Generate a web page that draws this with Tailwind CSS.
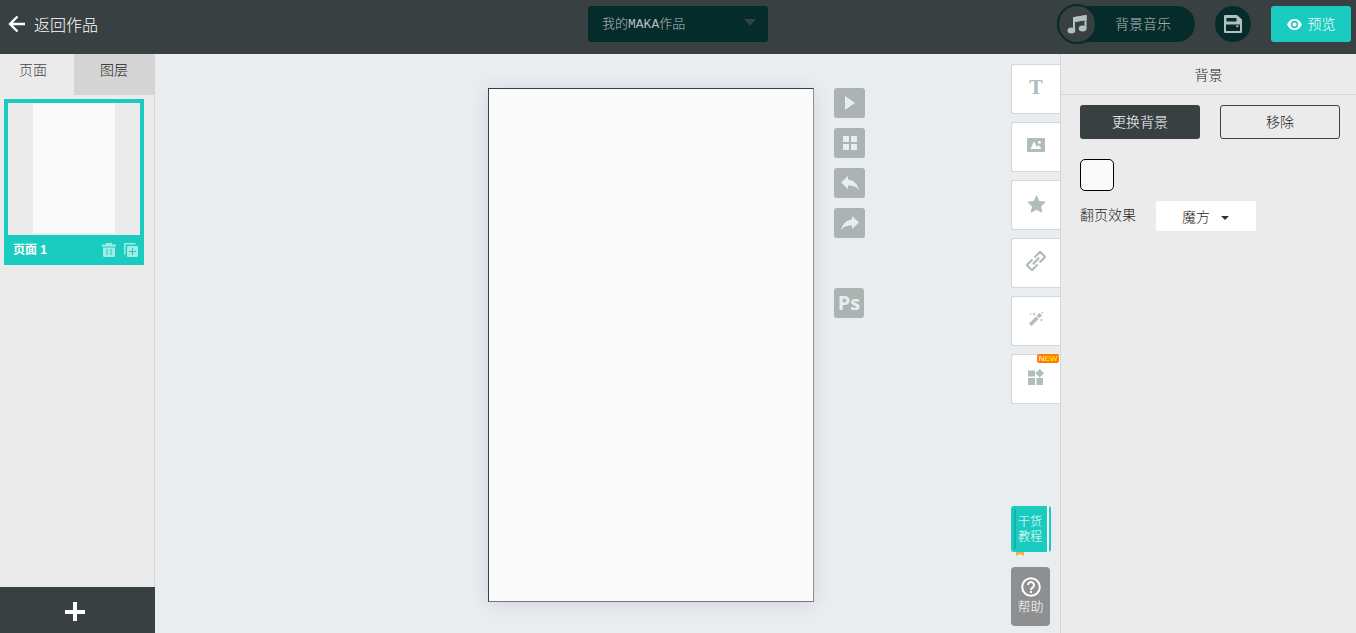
<!DOCTYPE html>
<html lang="zh-CN">
<head>
  <meta charset="UTF-8" />
  <meta name="viewport" content="width=device-width, initial-scale=1.0"/>
  <title>MAKA</title>
  <script src="https://cdn.jsdelivr.net/npm/@tailwindcss/browser@4"></script>
</head>
<body class="h-screen flex flex-col overflow-hidden bg-[#e9edf0] text-sm font-light text-[#1c1c1c] font-['Liberation_Sans','Noto_Sans_CJK_SC',sans-serif]">

  <!-- 顶部栏 -->
  <header class="h-[54px] shrink-0 grid grid-cols-[1fr_auto_1fr] items-start bg-[#384042] text-white">
    <a href="#" class="flex items-center gap-2 h-12 pl-2 text-base">
      <svg class="w-[18px] h-[18px]" viewBox="0 0 18 18" fill="none" stroke="currentColor" stroke-width="2.4"><path d="M17 9H2M9.5 1.5 2 9l7.5 7.5"/></svg>
      <span class="pt-1">返回作品</span>
    </a>

    <div class="relative mt-1.5">
      <select aria-label="作品" class="appearance-none w-[180px] h-9 pt-0.5 pl-3.5 rounded-[3px] bg-[#052b2a] text-[#b4bfbf] text-[13px] font-['Liberation_Mono','Noto_Sans_CJK_SC',monospace]">
        <option>我的MAKA作品</option>
      </select>
      <svg class="absolute right-3 top-[13px] w-3 h-[7px] pointer-events-none" viewBox="0 0 12 7" fill="#384042"><path d="M0 0h12L6 7z"/></svg>
    </div>

    <div class="flex justify-end items-center gap-5 h-12 pr-[5px]">
      <button class="flex items-center h-9 w-[138px] rounded-full bg-[#052b2a] text-[#b4bfbf]">
        <span class="flex items-center justify-center shrink-0 w-10 h-10 rounded-full border-2 border-[#052b2a] bg-[#384042]">
          <svg class="w-5 h-5" viewBox="0 0 20 20" fill="currentColor"><path fill-rule="evenodd" d="M6 3.200 19.500 1v13.500h-2V6.300L8 7.900v8.600H6z"/><path d="M6 3.200 19.500 1v5L6 8.200z"/><ellipse cx="4.400" cy="16.400" rx="3.900" ry="3"/><ellipse cx="15.600" cy="14.500" rx="3.900" ry="3"/></svg>
        </span>
        <span class="pl-[18px]">背景音乐</span>
      </button>
      <button aria-label="保存" class="flex items-center justify-center w-9 h-9 rounded-full bg-[#052b2a] text-[#b4bfbf]">
        <svg class="w-[18px] h-[18px]" viewBox="0 0 18 18" fill="currentColor" fill-rule="evenodd"><path d="M1 0H13l5 4.500V17a1 1 0 0 1-1 1H1a1 1 0 0 1-1-1V1a1 1 0 0 1 1-1zM2.500 3v3.500h10V3zM2 9.500V16h14V9.500zM12 10.500h2.500V12H12z"/></svg>
      </button>
      <button class="flex items-center justify-center gap-1.5 w-20 h-9 rounded-[3px] bg-[#1accc0]">
        <svg class="w-[15px] h-[11px]" viewBox="0 0 15 11" fill="currentColor" fill-rule="evenodd"><path d="M7.500 0C11 0 13.500 2 15 5.500 13.500 9 11 11 7.500 11S1.500 9 0 5.500C1.500 2 4 0 7.500 0zm0 1.800a3.700 3.700 0 1 0 0 7.400 3.700 3.700 0 0 0 0-7.400zm0 1.600a2.100 2.100 0 1 1 0 4.200 2.100 2.100 0 0 1 0-4.200z"/></svg>
        预览
      </button>
    </div>
  </header>

  <div class="flex-1 min-h-0 flex">

    <!-- 页面列表 -->
    <aside class="w-[155px] shrink-0 flex flex-col bg-[#ebebeb]">
      <div class="flex-1 border-r border-[#d3d5d6]">
        <div class="flex h-[41px]">
          <button class="w-[74px] pb-2.5 pr-2 text-[#444]">页面</button>
          <button class="flex-1 pb-2.5 bg-[#d5d5d5]">图层</button>
        </div>
        <div class="w-[140px] ml-1 mt-1 border-4 border-[#1accc0] bg-[#1accc0]">
          <div class="flex justify-center h-[132px] bg-[#ebebeb]">
            <div class="w-[82px] h-[130px] bg-[#fafafa]"></div>
          </div>
          <div class="flex items-center h-[26px] pt-1 pl-[5px] pr-[2px] text-white">
            <span class="flex-1 text-xs font-bold">页面 1</span>
            <button aria-label="删除" class="mr-2">
              <svg class="w-3.5 h-3.5" viewBox="0 0 14 14" fill="#a3ebe6" fill-rule="evenodd"><path d="M4 0h6v1.500h4v2H0v-2h4zM1 4.500h12V12.500a1.500 1.500 0 0 1-1.500 1.500h-9A1.500 1.500 0 0 1 1 12.500zM4.500 6v6h1V6zM8.500 6v6h1V6z"/></svg>
            </button>
            <button aria-label="复制">
              <svg class="w-3.5 h-3.5" viewBox="0 0 14 14" fill="#a3ebe6" fill-rule="evenodd"><path d="M1 0h10.500v1.500h-10v10H0V1a1 1 0 0 1 1-1zM4 3h9a1 1 0 0 1 1 1v9a1 1 0 0 1-1 1H4a1 1 0 0 1-1-1V4a1 1 0 0 1 1-1zM8 5v3H5v1h3v3h1V9h3V8H9V5z"/></svg>
            </button>
          </div>
        </div>
      </div>
      <button aria-label="添加页面" class="flex items-center justify-center h-[46px] pt-1 pr-1.5 bg-[#384042] text-white">
        <svg class="w-5 h-5" viewBox="0 0 20 20" fill="none" stroke="currentColor" stroke-width="4"><path d="M10 0v19M0 10h20"/></svg>
      </button>
    </aside>

    <!-- 画布 -->
    <main class="flex-1 flex">
      <div class="flex-1 flex justify-center gap-5 pt-[34px] pb-[31px] pl-[187px]">
        <div class="w-[326px] border border-[#384042] border-r-[#8c9091] border-b-[#77797b] bg-[#fafafa] shadow-[0_2px_16px_rgba(80,60,90,0.14)]"></div>
        <div class="flex flex-col gap-2.5 text-[#e9edf0]">
          <button aria-label="播放" class="flex items-center justify-center w-[31px] h-[30px] rounded-[3px] bg-[#abb4b3]">
            <svg class="w-2.5 h-3.5" viewBox="0 0 10 14" fill="currentColor"><path d="M0 0v14l10-7z"/></svg>
          </button>
          <button aria-label="网格" class="flex items-center justify-center w-[31px] h-[30px] rounded-[3px] bg-[#abb4b3]">
            <svg class="w-3.5 h-3.5" viewBox="0 0 14 14" fill="currentColor"><path d="M0 0h6v6H0zM8 0h6v6H8zM0 8h6v6H0zM8 8h6v6H8z"/></svg>
          </button>
          <button aria-label="撤销" class="flex items-center justify-center w-[31px] h-[30px] rounded-[3px] bg-[#abb4b3]">
            <svg class="w-[18px] h-3.5" viewBox="0 0 18 14" fill="currentColor"><path d="M7 0v3.500c6 .8 9.500 4.500 11 10.500-2.500-3.500-6-4.600-11-4.600V13L0 6.500z"/></svg>
          </button>
          <button aria-label="重做" class="flex items-center justify-center w-[31px] h-[30px] rounded-[3px] bg-[#abb4b3]">
            <svg class="w-[18px] h-3.5" viewBox="0 0 18 14" fill="currentColor"><path d="M11 0v3.500C5 4.300 1.500 8 0 14c2.500-3.500 6-4.600 11-4.600V13l7-6.500z"/></svg>
          </button>
          <button class="flex items-center justify-center w-[30px] h-[30px] mt-10 rounded-[3px] bg-[#abb4b3] text-xl font-bold font-['Open_Sans',sans-serif]">Ps</button>
        </div>
      </div>

      <!-- 元素工具 -->
      <div class="w-[49px] flex flex-col pt-2.5 text-[#b1bcbd]">
        <div class="flex flex-col gap-2">
          <button class="flex items-center justify-center h-[50px] pb-0.5 rounded-l-[3px] border border-r-0 border-[#d3d5d6] bg-white text-lg font-bold font-['DejaVu_Serif',serif]">T</button>
          <button aria-label="图片" class="flex items-center justify-center h-[50px] pb-1 rounded-l-[3px] border border-r-0 border-[#d3d5d6] bg-white">
            <svg class="w-[18px] h-3.5" viewBox="0 0 18 14" fill="currentColor" fill-rule="evenodd"><path d="M1 0h16a1 1 0 0 1 1 1v12a1 1 0 0 1-1 1H1a1 1 0 0 1-1-1V1a1 1 0 0 1 1-1zM3.500 11h11L11.500 7 9.800 9 7 3.500zM12.500 3a1.400 1.400 0 1 0 0 2.800 1.400 1.400 0 0 0 0-2.800z"/></svg>
          </button>
          <button aria-label="形状" class="flex items-center justify-center h-[50px] pb-0.5 rounded-l-[3px] border border-r-0 border-[#d3d5d6] bg-white">
            <svg class="w-[19px] h-[18px]" viewBox="0 0 19 18" fill="currentColor"><path d="m9.500 0 2.800 6 6.700.8-4.900 4.600L15.400 18l-5.900-3.300L3.600 18l1.300-6.600L0 6.800 6.700 6z"/></svg>
          </button>
          <button aria-label="链接" class="flex items-center justify-center h-[50px] pb-1 rounded-l-[3px] border border-r-0 border-[#d3d5d6] bg-white">
            <svg class="w-5 h-5" viewBox="0 0 20 20" fill="none" stroke="currentColor" stroke-width="2.200"><g transform="rotate(-45 10 10)"><path d="M8.600 6.400H.6v7.200h8M11.400 6.400h8v7.200h-8M5.500 10h9"/></g></svg>
          </button>
          <button aria-label="特效" class="flex items-center justify-center h-[50px] pb-1 rounded-l-[3px] border border-r-0 border-[#d3d5d6] bg-white">
            <svg class="w-3.5 h-3.5" viewBox="0 0 14 14" fill="currentColor"><path d="m0 11.500 7-7L9.500 7l-7 7zM7.800 3.700 10.500 1 13 3.500 10.300 6.200zM5 0l.6 1.400L7 2l-1.400.6L5 4l-.6-1.400L3 2l1.400-.6zM1.500 1l.4.800.8.400-.8.400-.4.800-.4-.800-.8-.400.800-.400zM12.500 6.500l.5 1 1 .5-1 .5-.5 1-.5-1-1-.5 1-.5zM12.500 0h1.500v1.500h-1.500z"/></svg>
          </button>
          <button aria-label="组件" class="relative flex items-center justify-center h-[50px] pb-1 rounded-l-[3px] border border-r-0 border-[#d3d5d6] bg-white">
            <svg class="w-4 h-4" viewBox="0 0 16 16" fill="currentColor"><path d="M0 1.500h7v6H0zM0 9h7v7H0zM8.500 9h6.500v7H8.500zM11.700 0 16 4.200l-4.300 4.300-4.300-4.300z"/></svg>
            <span class="absolute top-[-1px] right-[1px] w-[22px] h-[9px] rounded-[2px] bg-[#ff7e00] text-[8px] leading-[9px] font-normal font-['Liberation_Sans',sans-serif] text-[#ff0]"><span class="text-white">N</span>EW</span>
          </button>
        </div>
        <a href="#" class="relative mt-auto w-10 h-[46px] flex items-center pt-0.5 rounded-[3px] bg-[#1accc0] text-white text-xs leading-[15px]">
          <span class="absolute left-[3px] inset-y-[3px] w-[2px] bg-[#15b2a8]"></span>
          <span class="absolute right-[2px] inset-y-0 w-[2px] bg-white"></span>
          <svg class="absolute left-[5px] top-full w-2 h-1" viewBox="0 0 8 4" fill="#f2b04d"><path d="M0 0h8v4L4 2 0 4z"/></svg>
          <span class="w-6 ml-[7px]">干货教程</span>
        </a>
        <button class="flex flex-col items-center justify-center w-[39px] h-[59px] mt-[15px] mb-[7px] rounded-[4px] bg-[#8e8f91] text-white text-[13px] leading-5">
          <svg class="w-5 h-5" viewBox="0 0 20 20" fill="none" stroke="currentColor" stroke-width="2"><circle cx="10" cy="10" r="8.800"/><path d="M7 8a3 3 0 1 1 4.500 2.600C10.400 11.300 10 11.700 10 13M10 14v2"/></svg>
          帮助
        </button>
      </div>
    </main>

    <!-- 背景设置 -->
    <aside class="w-[296px] shrink-0 border-l border-[#d3d5d6] bg-[#ebebeb]">
      <h2 class="h-[41px] leading-[42px] border-b border-[#d3d5d6] text-center">背景</h2>
      <div class="pl-[19px] pr-4 pt-2.5">
        <div class="grid grid-cols-2 gap-5">
          <button class="h-[34px] rounded-[3px] bg-[#384042] text-white">更换背景</button>
          <button class="h-[34px] rounded-[3px] border border-[#384042]">移除</button>
        </div>
        <button aria-label="背景颜色" class="block w-[34px] h-8 mt-5 rounded-[5px] border border-black bg-[#fafafa]"></button>
        <div class="flex mt-2.5">
          <label for="effect" class="w-[76px] leading-7">翻页效果</label>
          <div class="relative">
            <select id="effect" class="appearance-none w-[100px] h-[30px] pt-0.5 pl-[26px] rounded-[2px] bg-white">
              <option>魔方</option>
            </select>
            <svg class="absolute right-[27px] top-[15px] w-2 h-1 pointer-events-none" viewBox="0 0 8 4" fill="#333"><path d="M0 0h8L4 4z"/></svg>
          </div>
        </div>
      </div>
    </aside>

  </div>

</body>
</html>
